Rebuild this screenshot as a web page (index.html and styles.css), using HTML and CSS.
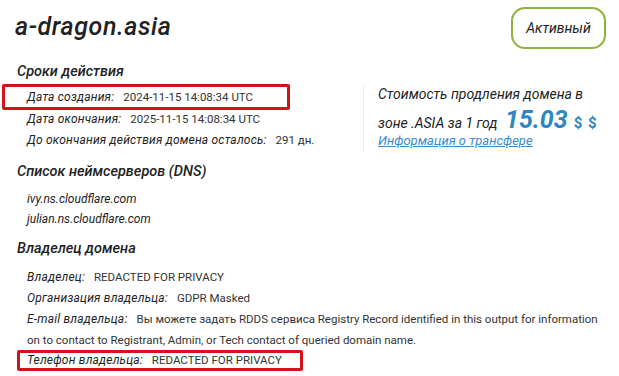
FILE: index.html
```html
<!DOCTYPE html>
<html lang="ru">
<head>
<meta charset="utf-8">
<title>a-dragon.asia</title>
<link rel="stylesheet" href="styles.css">
</head>
<body>
<div class="page">
  <header class="header">
    <h1 class="title">a-dragon.asia</h1>
    <div class="badge">Активный</div>
  </header>

  <section class="section">
    <h2 class="heading">Сроки действия</h2>
    <div class="terms">
      <div class="rows">
        <div class="row hl hl-first"><span class="label">Дата создания:</span><span class="value">2024-11-15 14:08:34 UTC</span></div>
        <div class="row"><span class="label">Дата окончания:</span><span class="value">2025-11-15 14:08:34 UTC</span></div>
        <div class="row"><span class="label">До окончания действия домена осталось:</span><span class="value">291 дн.</span></div>
      </div>
      <aside class="price">
        <p class="price-text">Стоимость продления домена в зоне .ASIA за 1 год <span class="amount">15.03</span><span class="currency">$ $</span></p>
        <a class="link" href="#">Информация о трансфере</a>
      </aside>
    </div>
  </section>

  <section class="section">
    <h2 class="heading heading-dns">Список неймсерверов (DNS)</h2>
    <div class="ns-list">
      <div class="ns">ivy.ns.cloudflare.com</div>
      <div class="ns">julian.ns.cloudflare.com</div>
    </div>
  </section>

  <section class="section">
    <h2 class="heading heading-owner">Владелец домена</h2>
    <div class="rows owner">
      <div class="row"><span class="label">Владелец:</span><span class="value">REDACTED FOR PRIVACY</span></div>
      <div class="row"><span class="label">Организация владельца:</span><span class="value">GDPR Masked</span></div>
      <div class="row row-wrap"><span class="label">E-mail владельца:</span><span class="value">Вы можете задать RDDS сервиса Registry Record identified in this output for information on to contact to Registrant, Admin, or Tech contact of queried domain name.</span></div>
      <div class="row hl hl-second"><span class="label">Телефон владельца:</span><span class="value">REDACTED FOR PRIVACY</span></div>
    </div>
  </section>
</div>
</body>
</html>
```

FILE: styles.css
```css
* { box-sizing: border-box; }
html, body { margin: 0; padding: 0; background: #fff; }
body {
  font-family: Roboto, "Noto Sans", sans-serif;
  color: #333;
  width: 619px;
  height: 376px;
  overflow: hidden;
}
.page { padding: 7px 13px 0 17px; }

.header {
  display: flex;
  justify-content: space-between;
  align-items: flex-start;
  height: 42px;
}
.title {
  margin: 5px 0 0 -2px;
  font-size: 25px;
  line-height: 30px;
  font-style: italic;
  font-weight: 500;
  color: #222;
  letter-spacing: 0.6px;
}
.badge {
  width: 95px;
  height: 42px;
  border: 2px solid #8fb23e;
  border-radius: 14px;
  display: flex;
  align-items: center;
  justify-content: center;
  font-size: 14px;
  font-style: italic;
  color: #222;
}

.heading {
  margin: 12.5px 0 0;
  font-size: 14.5px;
  line-height: 20px;
  font-style: italic;
  font-weight: 500;
  color: #222;
}
.heading-dns { margin-top: 9.5px; }
.heading-owner { margin-top: 10.5px; }

.terms { display: flex; margin-top: 6px; }
.rows { padding-left: 10px; }
.terms .rows { flex: 0 0 346px; }
.row {
  font-size: 12px;
  line-height: 21px;
  white-space: nowrap;
}
.row-wrap { white-space: normal; }
.label {
  font-style: italic;
  color: #222;
  margin-right: 9px;
  letter-spacing: 0.2px;
}
.value { color: #333; font-size: 11.5px; }

.hl { border: 3px solid #d0141b; border-radius: 2px; }
.hl-first {
  margin: -3.5px 0 -1.5px -25px;
  padding-left: 22px;
  width: 288px;
  line-height: 20px;
}
.hl-second {
  margin: -1px 0 0 -10px;
  padding-left: 7px;
  width: 286px;
  line-height: 15px;
}

.price {
  flex: 0 0 auto;
  width: 243px;
  border-left: 1px solid #ededed;
  padding-left: 14px;
  margin-top: -2px;
  height: 67px;
}
.price-text {
  margin: -4px 0 0;
  font-size: 14px;
  line-height: 25px;
  font-style: italic;
  color: #222;
}
.amount {
  font-size: 25px;
  line-height: 1;
  font-weight: 700;
  font-style: italic;
  color: #2f86c1;
  margin-left: 4px;
}
.currency {
  font-size: 15px;
  font-weight: 700;
  font-style: normal;
  color: #2f86c1;
  margin-left: 6px;
  letter-spacing: 1px;
}
.link {
  display: block;
  font-size: 13px;
  line-height: 18px;
  font-style: italic;
  color: #3a8ccb;
  text-decoration: underline;
  margin-top: -4px;
}

.ns-list { margin-top: 6.5px; padding-left: 10px; }
.ns {
  font-size: 12px;
  line-height: 20px;
  font-style: italic;
  color: #222;
}

.owner { margin-top: 8px; }
```
